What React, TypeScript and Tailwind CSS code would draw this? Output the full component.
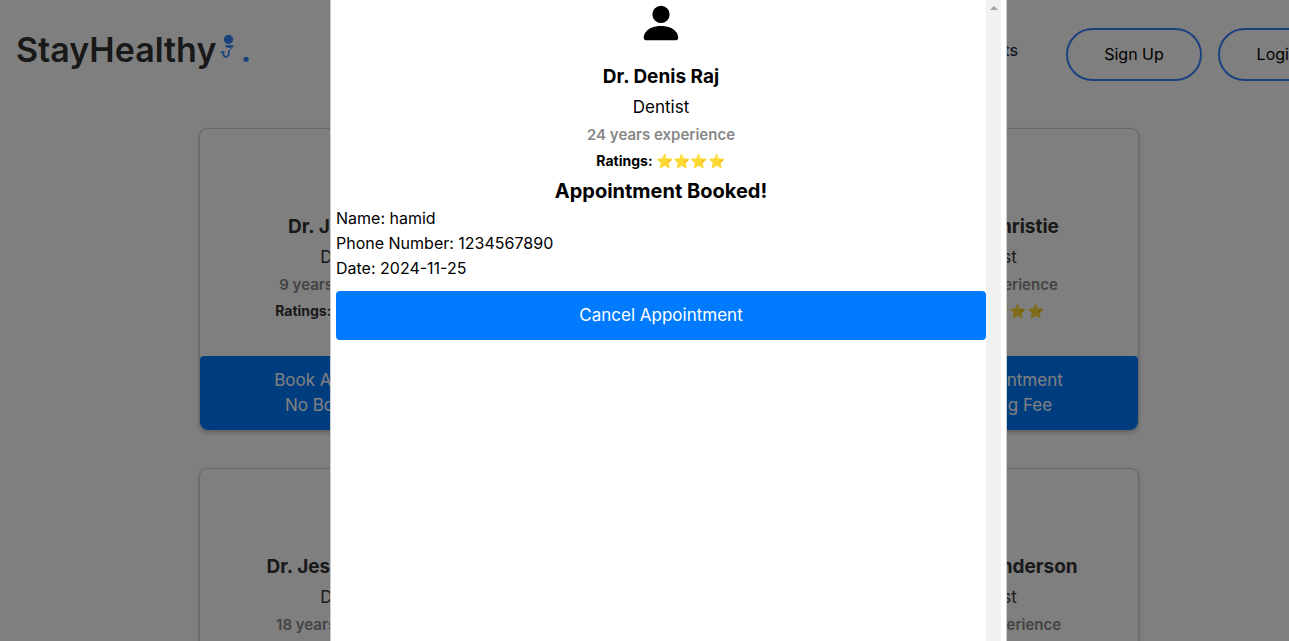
import React from "react";

type Doctor = {
  name: string;
  experience: number;
  rating: number;
};

const doctors: Doctor[] = [
  { name: "Dr. Jiao Yang", experience: 9, rating: 5 },
  { name: "Dr. Denis Raj", experience: 24, rating: 4 },
  { name: "Dr. Lyn Christie", experience: 8, rating: 3 },
  { name: "Dr. Jessica Reeds", experience: 18, rating: 4 },
  { name: "Dr. Mark Wells", experience: 12, rating: 4 },
  { name: "Dr. Laura Anderson", experience: 10, rating: 5 },
];

function PersonIcon() {
  return (
    <svg viewBox="0 0 16 16" className="size-[46px]" fill="currentColor" aria-hidden="true">
      <path d="M3 14s-1 0-1-1 1-4 6-4 6 3 6 4-1 1-1 1zm5-6a3 3 0 1 0 0-6 3 3 0 0 0 0 6" />
    </svg>
  );
}

function LogoMark() {
  return (
    <svg viewBox="0 0 16 26" className="mb-2 h-[26px] w-4 shrink-0" fill="none" aria-hidden="true">
      <circle cx="8.5" cy="6.4" r="4.6" fill="#3685fb" />
      <path d="M4.8 12.2h8.4c-.8 1.7-2.4 2.8-4.2 2.8s-3.400-1.100-4.200-2.800z" fill="#3685fb" />
      <path d="M14 12.200 9 18" stroke="#3685fb" strokeWidth="1" />
      <path
        d="M1.300 19.400l2.200-.4c-.7 2.700.6 5 2.600 4.900 2.400-.1 3.100-2.400 2.700-5.900"
        stroke="#3685fb"
        strokeWidth="1.700"
        strokeLinecap="round"
      />
    </svg>
  );
}

function DoctorInfo({ doctor }: { doctor: Doctor }) {
  return (
    <div className="flex flex-col items-center text-center">
      <PersonIcon />
      <h2 className="mt-[17px] text-[19px] leading-7 font-bold">{doctor.name}</h2>
      <p className="mt-1 text-[17px] leading-6">Dentist</p>
      <p className="mt-1.5 text-[15px] leading-5 font-semibold text-[#888]">
        {doctor.experience} years experience
      </p>
      <p className="mt-1.5 text-[14px] leading-5 font-bold">
        Ratings: {"⭐".repeat(doctor.rating)}
      </p>
    </div>
  );
}

function DoctorCard({ doctor }: { doctor: Doctor }) {
  return (
    <article className="w-[300px] rounded-lg border border-[#ccc] pt-[21px] text-[#333] shadow-[0_2px_4px_rgba(0,0,0,0.2)]">
      <DoctorInfo doctor={doctor} />
      <button
        type="button"
        className="mt-[35px] w-full rounded-t rounded-b-lg bg-[#007bff] py-3 text-[17px] leading-[25px] text-white"
      >
        <span className="block">Book Appointment</span>
        <span className="block">No Booking Fee</span>
      </button>
    </article>
  );
}

function Header() {
  return (
    <header className="flex h-[108px] items-center justify-between pl-4">
      <a href="#" className="flex items-center pb-2 text-[34px] leading-[50px] font-semibold text-[#333]">
        StayHealthy
        <span className="ml-1 flex items-center text-[#3685fb]">
          <LogoMark />
          <span className="ml-1">.</span>
        </span>
      </a>
      <nav className="flex items-center gap-4 text-[16px]">
        <a href="#" className="mr-8 pb-2 font-medium text-[#1b2a4a]">
          Appointments
        </a>
        <button type="button" className="h-[53px] w-[136px] rounded-full border-2 border-[#3685fb]">
          Sign Up
        </button>
        <button type="button" className="h-[53px] w-[119px] rounded-full border-2 border-[#3685fb]">
          Login
        </button>
      </nav>
    </header>
  );
}

function BookingDialog() {
  return (
    <div
      role="dialog"
      aria-label="Appointment"
      className="flex h-full w-[677px] max-w-full border-x border-[#ccc] bg-white px-[5px] text-black"
    >
      <div className="min-w-0 flex-1">
        <DoctorInfo doctor={doctors[1]} />
        <h3 className="mt-1.5 text-center text-[20px] leading-[29px] font-bold">Appointment Booked!</h3>
        <div className="text-[16px] leading-[25px]">
          <p>Name: hamid</p>
          <p>Phone Number: 1234567890</p>
          <p>Date: 2024-11-25</p>
        </div>
        <button
          type="button"
          className="mt-2.5 h-[49px] w-full rounded bg-[#007bff] text-[17px] text-white"
        >
          Cancel Appointment
        </button>
      </div>
      <div className="flex w-[15px] justify-center bg-[#f1f1f1] pt-1.5">
        <svg viewBox="0 0 8 4" className="h-1 w-2" fill="#a3a3a3" aria-hidden="true">
          <path d="M0 4 4 0l4 4z" />
        </svg>
      </div>
    </div>
  );
}

export default function App() {
  return (
    <div className="relative h-screen overflow-hidden bg-white font-['Inter','Noto_Color_Emoji',sans-serif] text-black">
      <div className="-mr-12">
        <Header />
        <main className="flex flex-wrap justify-center gap-x-5 gap-y-[37px] px-[100px] pt-5">
          {doctors.map((doctor) => (
            <DoctorCard key={doctor.name} doctor={doctor} />
          ))}
        </main>
      </div>
      <div className="absolute inset-y-0 left-0 -right-12 flex justify-center bg-black/50">
        <BookingDialog />
      </div>
    </div>
  );
}
